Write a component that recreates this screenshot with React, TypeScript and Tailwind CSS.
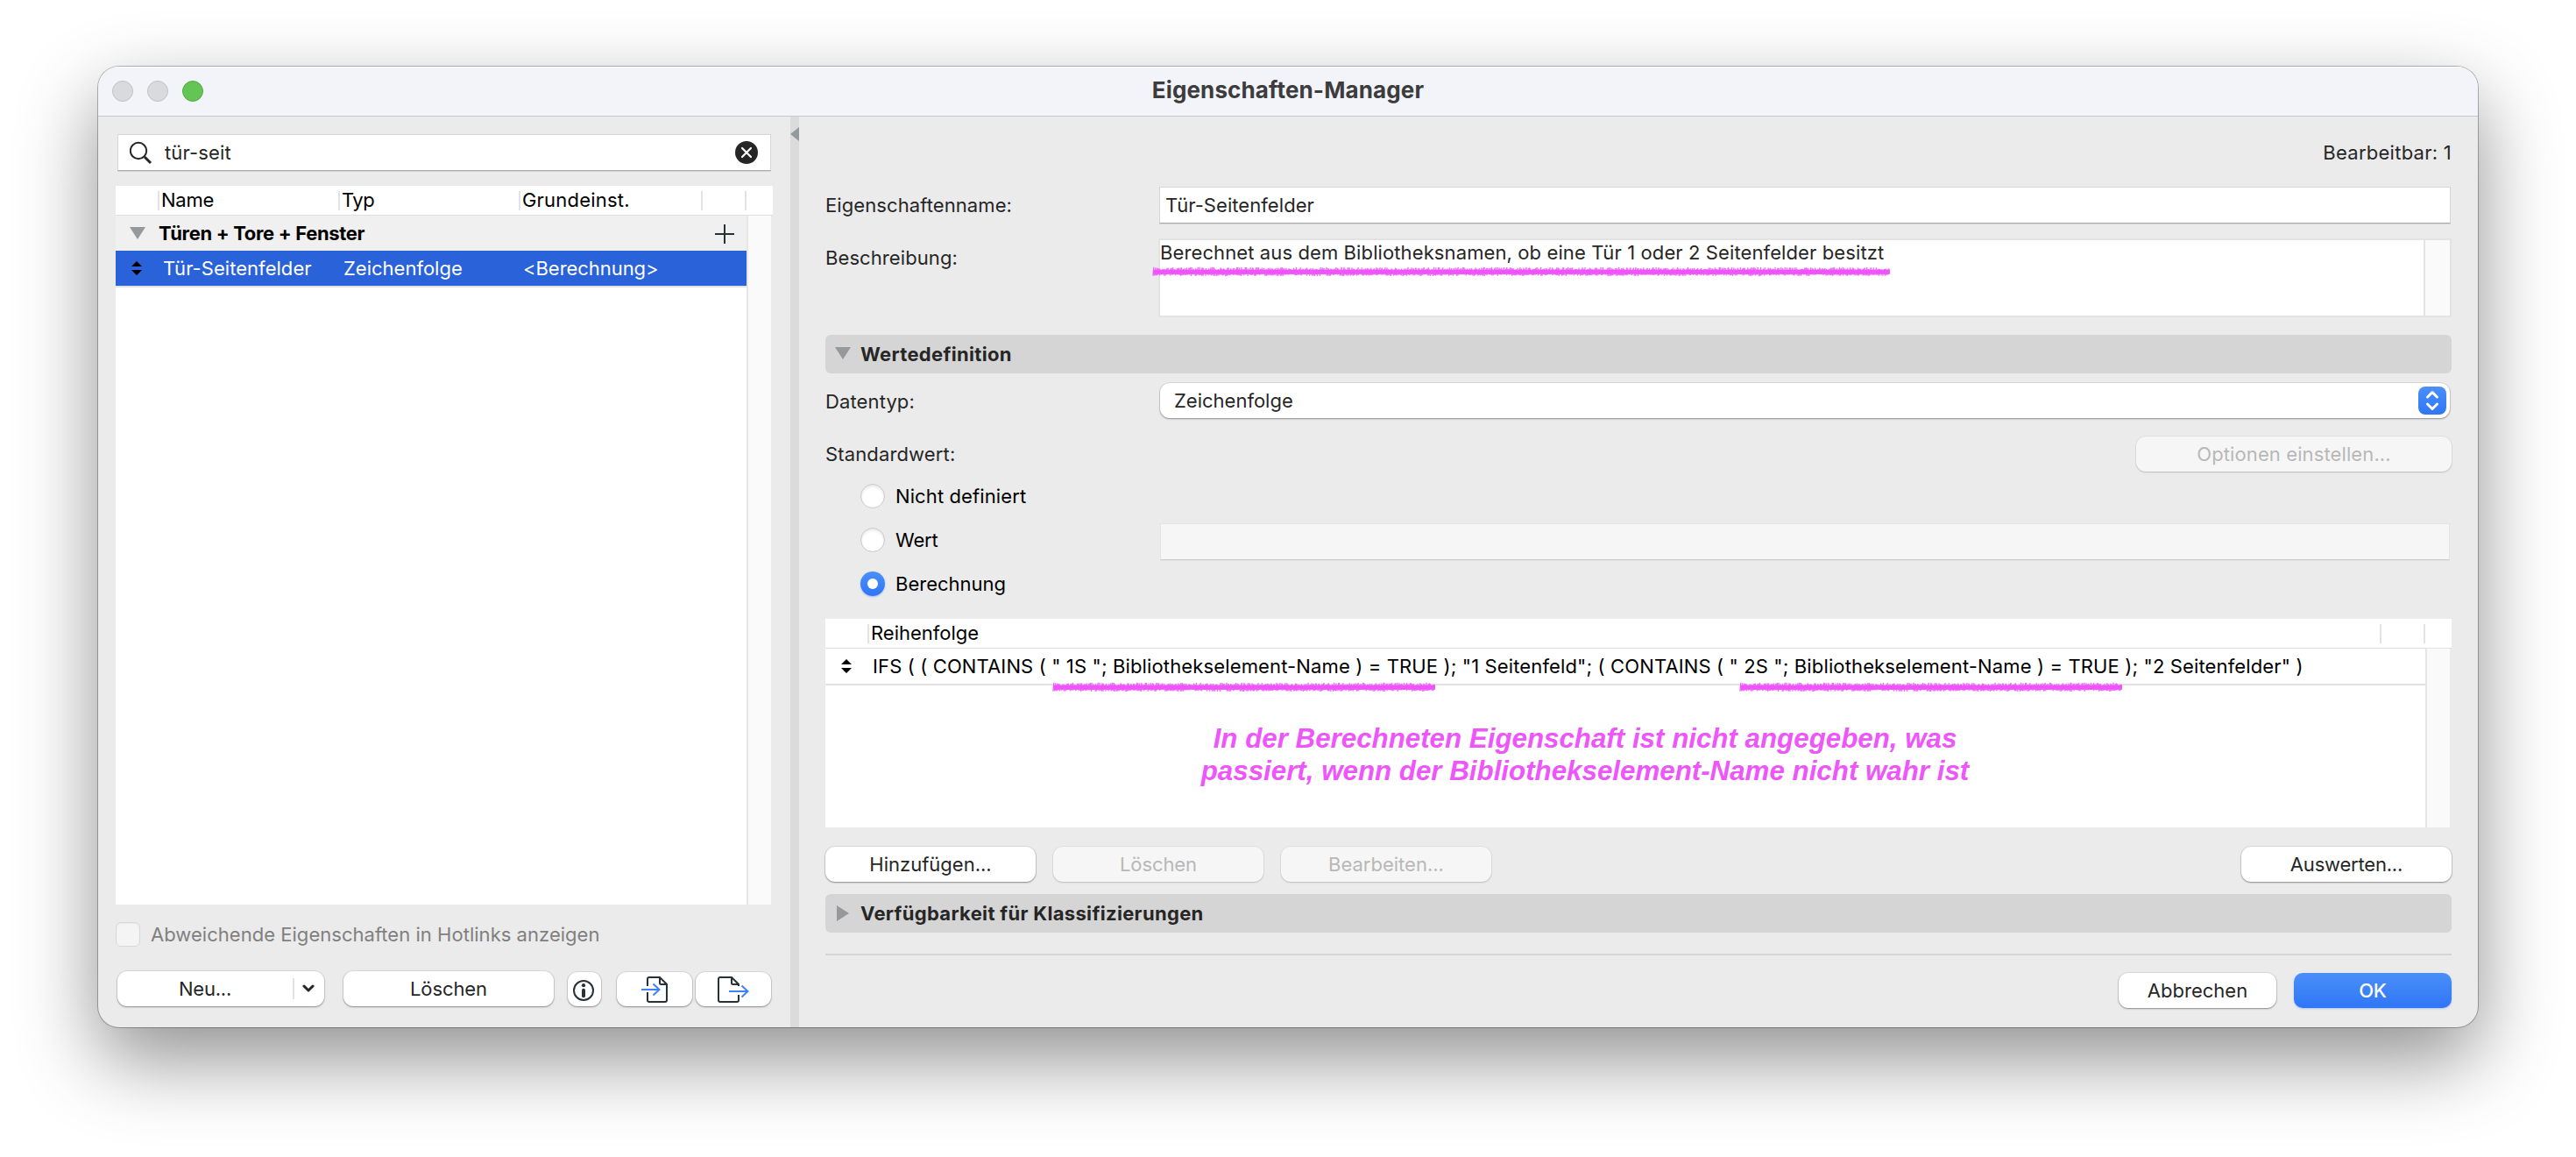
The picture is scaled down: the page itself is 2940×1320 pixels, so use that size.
import type { ReactNode } from "react";

const INK = "text-[#262626]";

function Marker({ width, className }: { width: number; className: string }) {
  let seed = 7;
  const rnd = () => {
    seed = (seed * 16807) % 2147483647;
    return seed / 2147483647;
  };
  const strokes: string[] = [];
  for (let x = 1; x < width - 3; x += 1.5) {
    const top = 0.8 + rnd() * 2.6;
    const bottom = 8.6 + rnd() * 2.4;
    strokes.push(`M${x.toFixed(1)} ${bottom.toFixed(1)}L${(x + rnd() * 2.6).toFixed(1)} ${top.toFixed(1)}`);
  }
  return (
    <svg className={`absolute ${className}`} width={width} height={12} viewBox={`0 0 ${width} 12`} fill="none">
      <path d={`M1 6.2H${width - 1}`} stroke="#ee55fa" strokeWidth={5} />
      <path d={strokes.join("")} stroke="#ee55fa" strokeWidth={1.4} strokeOpacity={0.85} />
    </svg>
  );
}

function Sorter() {
  return (
    <svg width={12} height={16} viewBox="0 0 12 16" fill="#000">
      <path d="M0 6 6 0l6 6zM0 10h12l-6 6z" />
    </svg>
  );
}

function Button({ children, className = "", disabled = false }: { children: ReactNode; className?: string; disabled?: boolean }) {
  const look = disabled
    ? "bg-[#f6f6f6] text-[#b8b8b8] shadow-[0_0_0_1px_rgba(0,0,0,0.04),0_1px_2px_rgba(0,0,0,0.16)]"
    : "bg-white text-[#262626] shadow-[0_0_0_1px_rgba(0,0,0,0.07),0_1px_2px_rgba(0,0,0,0.36)]";
  return <button className={`flex h-10 shrink-0 items-center justify-center rounded-[11px] ${look} ${className}`}>{children}</button>;
}

function Radio({ label, checked = false, tracking = "" }: { label: string; checked?: boolean; tracking?: string }) {
  return (
    <div className="flex h-7 w-[382px] shrink-0 items-center gap-3 pl-10 text-black">
      {checked ? (
        <span className="flex size-7 items-center justify-center rounded-full bg-gradient-to-b from-[#4a8ff8] to-[#3076f6] shadow-[0_1px_2px_rgba(48,118,246,0.4)]">
          <span className="size-3 rounded-full bg-white" />
        </span>
      ) : (
        <span className="size-7 rounded-full border border-[#c9c9c9] bg-white shadow-[inset_0_2px_3px_rgba(0,0,0,0.1)]" />
      )}
      <span className={tracking}>{label}</span>
    </div>
  );
}

function Section({ title, open, className }: { title: string; open: boolean; className: string }) {
  return (
    <div className={`flex h-11 items-center rounded-md bg-[#d5d5d5] font-bold tracking-[0.33px] text-[#262626] ${className}`}>
      <svg className="mr-[11px] ml-[11px]" width={18} height={18} viewBox="0 0 18 18" fill="#94999c">
        {open ? <path d="M0 1h18L9 15z" /> : <path d="M2 0v18l14-9z" />}
      </svg>
      {title}
    </div>
  );
}

const ColumnLine = ({ className = "" }: { className?: string }) => <span className={`h-[22px] w-0.5 shrink-0 bg-[#e3e3e3] ${className}`} />;

function Sidebar() {
  return (
    <div className="flex w-[790px] shrink-0 flex-col pt-5 pl-5">
      <div className={`ml-0.5 flex h-[42px] w-[746px] items-center border border-[#d6d6d6] border-b-[#adadad] bg-white shadow-[0_1px_0_rgba(0,0,0,0.1)] ${INK}`}>
        <svg className="ml-[13px]" width={26} height={28} viewBox="0 0 26 28" fill="none" stroke="#262626">
          <circle cx={10} cy={12} r={9.2} strokeWidth={2} />
          <path d="m17 19 7 7" strokeWidth={3} />
        </svg>
        <span className="ml-3.5 tracking-[0.14px]">tür-seit</span>
        <svg className="mr-3.5 ml-auto" width={26} height={26} viewBox="0 0 26 26" fill="none">
          <circle cx={13} cy={13} r={13} fill="#262626" />
          <path d="m8 8 10 10M18 8 8 18" stroke="#fff" strokeWidth={2.2} strokeLinecap="round" />
        </svg>
      </div>

      <div className="mt-[17px] flex h-[820px] w-[750px] flex-col text-black">
        <div className="flex h-[34px] items-center border-b border-[#e0e0e0] bg-white">
          <ColumnLine className="ml-12" />
          <span className="w-[204px] pb-0.5 pl-0.5 tracking-[-0.25px]">Name</span>
          <ColumnLine />
          <span className="w-[204px] pb-0.5 pl-0.5 tracking-[-0.5px]">Typ</span>
          <ColumnLine />
          <span className="w-[206px] pb-0.5 pl-0.5 tracking-[0.2px]">Grundeinst.</span>
          <ColumnLine />
          <ColumnLine className="ml-12" />
        </div>
        <div className="flex min-h-0 flex-1 pr-0.5">
          <div className="flex flex-1 flex-col bg-white">
            <div className="flex h-10 items-center bg-[#f0f0f0]">
              <svg className="ml-4" width={18} height={14} viewBox="0 0 18 14" fill="#94999c">
                <path d="M0 0h18L9 14z" />
              </svg>
              <span className="ml-[15px] font-bold tracking-[-0.33px]">Türen + Tore + Fenster</span>
              <svg className="mt-0.5 mr-3.5 ml-auto" width={22} height={22} viewBox="0 0 22 22" stroke="#263238" strokeWidth={2}>
                <path d="M0 11h22M11 0v22" />
              </svg>
            </div>
            <div className="flex h-10 items-center bg-[#2962d9] text-white">
              <span className="ml-[18px] flex">
                <Sorter />
              </span>
              <span className="ml-6 w-[206px] tracking-[0.04px]">Tür-Seitenfelder</span>
              <span className="w-[205px]">Zeichenfolge</span>
              <span className="tracking-[-0.05px]">&lt;Berechnung&gt;</span>
            </div>
            <div className="h-0.5 bg-[#e2e2e2]" />
          </div>
          <div className="w-7 border-l-2 border-[#e6e6e6] bg-[#fafafa]" />
        </div>
      </div>

      <div className="mt-5 flex h-7 items-center text-[#808080]">
        <span className="size-7 rounded-md border border-[#d8d8d8] bg-[#f4f4f4] shadow-[inset_0_1px_2px_rgba(0,0,0,0.06)]" />
        <span className="ml-3 tracking-[0.03px]">Abweichende Eigenschaften in Hotlinks anzeigen</span>
      </div>

      <div className="mt-7 flex h-10 items-end pl-0.5">
        <Button className="w-[236px]">
          <span className="w-[200px] text-center tracking-[-0.2px]">Neu...</span>
          <span className="h-6 w-0.5 bg-[#e2e2e2]" />
          <svg className="mr-auto ml-[9px]" width={14} height={10} viewBox="0 0 14 10" fill="none" stroke="#262626" strokeWidth={3} strokeLinecap="round" strokeLinejoin="round">
            <path d="m2 2 5 5 5-5" />
          </svg>
        </Button>
        <Button className="ml-[22px] w-60 tracking-[-0.1px]">Löschen</Button>
        <Button className="ml-4 h-[39px]! w-[38px]">
          <svg className="mt-0.5 mr-0.5" width={24} height={24} viewBox="0 0 24 24">
            <circle cx={12} cy={12} r={11} fill="none" stroke="#263238" strokeWidth={2} />
            <circle cx={12} cy={6.2} r={2.1} fill="#263238" />
            <rect x={10} y={9.8} width={4} height={10.4} rx={2} fill="#263238" />
          </svg>
        </Button>
        <Button className="ml-[18px] h-[39px]! w-[86px]">
          <svg width={30} height={30} viewBox="0 0 30 30" fill="none" strokeWidth={2}>
            <path d="M7 11V3a2 2 0 0 1 2-2h12l8 8v18a2 2 0 0 1-2 2H9a2 2 0 0 1-2-2v-9M21 2v5.5A1.5 1.5 0 0 0 22.500 9H28" stroke="#263238" />
            <path d="M0 15h20M13.500 8.500 20.500 15l-7 6.500" stroke="#3e82fb" />
          </svg>
        </Button>
        <Button className="ml-1 h-[39px]! w-[86px]">
          <svg width={36} height={30} viewBox="0 0 36 30" fill="none" strokeWidth={2}>
            <path d="M24 11V9l-8-8H3a2 2 0 0 0-2 2v24a2 2 0 0 0 2 2h19a2 2 0 0 0 2-2v-6M16 2v5.500A1.500 1.500 0 0 0 17.500 9H23" stroke="#263238" />
            <path d="M13 17h21M27.500 10.500 34.500 17l-7 6.500" stroke="#3e82fb" />
          </svg>
        </Button>
      </div>
    </div>
  );
}

function Details() {
  return (
    <div className={`flex flex-1 flex-col px-[30px] pt-[27px] ${INK}`}>
      <div className="h-7 text-right leading-7 tracking-[0.26px]">Bearbeitbar: 1</div>

      <div className="mt-[25px] flex h-[42px] items-center">
        <span className="w-[381px] tracking-[0.09px]">Eigenschaftenname:</span>
        <div className="mr-px flex h-full flex-1 items-center border border-[#d6d6d6] border-b-[#adadad] bg-white pl-1.5 tracking-[0.06px] shadow-[0_1px_0_rgba(0,0,0,0.1)]">
          Tür-Seitenfelder
        </div>
      </div>

      <div className="mt-[17px] flex h-[90px]">
        <span className="w-[380px] leading-[44px] tracking-[0.09px]">Beschreibung:</span>
        <div className="relative flex flex-1 border-2 border-[#e3e3e3] bg-white">
          <div className="flex-1 leading-7 tracking-[0.108px]">Berechnet aus dem Bibliotheksnamen, ob eine Tür 1 oder 2 Seitenfelder besitzt</div>
          <div className="w-[30px] border-l-2 border-[#e3e3e3] bg-[#fafafa]" />
          <Marker width={843} className="top-[30px] -left-[9px]" />
        </div>
      </div>

      <Section title="Wertedefinition" open className="mt-5" />

      <div className="mt-2.5 flex h-[42px] items-center">
        <span className="w-[382px] pt-px tracking-[0.12px]">Datentyp:</span>
        <div className="mr-0.5 flex h-10 flex-1 items-center rounded-[11px] bg-white pr-1 pl-4 shadow-[0_0_0_1px_rgba(0,0,0,0.07),0_1px_2px_rgba(0,0,0,0.36)]">
          Zeichenfolge
          <span className="ml-auto flex size-8 items-center justify-center rounded-lg bg-gradient-to-b from-[#4a8ff8] to-[#3076f6]">
            <svg width={16} height={24} viewBox="0 0 16 24" fill="none" stroke="#fff" strokeWidth={3} strokeLinecap="round" strokeLinejoin="round">
              <path d="m2.500 8 5.500-5.500L13.500 8M2.500 16l5.500 5.500 5.500-5.500" />
            </svg>
          </span>
        </div>
      </div>

      <div className="mt-5 flex h-10 items-center justify-between">
        <span className="tracking-[0.14px]">Standardwert:</span>
        <Button disabled className="w-[360px] tracking-[0.11px]">Optionen einstellen...</Button>
      </div>

      <div className="mt-3.5">
        <Radio label="Nicht definiert" tracking="tracking-[0.11px]" />
      </div>
      <div className="mt-[17px] flex h-[42px] items-start">
        <div className="pt-[5px]">
          <Radio label="Wert" tracking="tracking-[-0.15px]" />
        </div>
        <div className="mr-0.5 h-full flex-1 border border-[#e4e4e4] border-b-[#cccccc] bg-[#f6f6f6] shadow-[0_1px_0_rgba(0,0,0,0.04)]" />
      </div>
      <div className="mt-[13px]">
        <Radio label="Berechnung" checked />
      </div>

      <div className="relative mt-[26px] flex h-[238px] flex-col text-black">
        <div className="flex h-[34px] items-center border-b border-[#e0e0e0] bg-white">
          <ColumnLine className="ml-12" />
          <span className="pb-0.5 pl-0.5">Reihenfolge</span>
          <ColumnLine className="ml-auto" />
          <ColumnLine className="mr-[30px] ml-12" />
        </div>
        <div className="flex min-h-0 flex-1 pr-0.5">
          <div className="flex-1 bg-white">
            <div className="flex h-10 items-center pl-[18px] whitespace-nowrap">
              <Sorter />
              <span className="ml-6 tracking-[0.135px]">
                {'IFS ( ( CONTAINS ( " 1S "; Bibliothekselement-Name ) = TRUE ); "1 Seitenfeld"; ( CONTAINS ( " 2S "; Bibliothekselement-Name ) = TRUE ); "2 Seitenfelder" )'}
              </span>
            </div>
            <div className="h-0.5 bg-[#e2e2e2]" />
          </div>
          <div className="w-7 border-l-2 border-[#e6e6e6] bg-[#fafafa]" />
        </div>
        <Marker width={438} className="top-[72px] left-[259px]" />
        <Marker width={438} className="top-[72px] left-[1043px]" />
        <div className="absolute top-[118px] left-[417px] w-[900px] text-center font-['Liberation_Sans',sans-serif] text-[31.3px] leading-[37px] font-bold text-[#ee55fa] italic">
          In der Berechneten Eigenschaft ist nicht angegeben, was
          <br />
          passiert, wenn der Bibliothekselement-Name nicht wahr ist
        </div>
      </div>

      <div className="mt-[22px] flex gap-5">
        <Button className="w-60">Hinzufügen...</Button>
        <Button disabled className="w-60 tracking-[-0.1px]">Löschen</Button>
        <Button disabled className="w-60">Bearbeiten...</Button>
        <Button className="ml-auto w-60 tracking-[-0.2px]">Auswerten...</Button>
      </div>

      <Section title="Verfügbarkeit für Klassifizierungen" open={false} className="mt-3.5" />

      <div className="mt-6 h-0.5 bg-[#d5d5d5]" />
      <div className="mt-5 flex justify-end gap-5">
        <Button className="w-[180px]">Abbrechen</Button>
        <button className="h-10 w-[180px] rounded-[10px] bg-gradient-to-b from-[#4a8ff8] to-[#3076f6] font-medium tracking-[-0.36px] text-white shadow-[0_1px_2px_rgba(48,118,246,0.35)]">
          OK
        </button>
      </div>
    </div>
  );
}

export default function App() {
  return (
    <div className="h-[1320px] w-[2940px] overflow-hidden bg-white pt-[76px] pl-28 font-['Inter',sans-serif] text-[22px] leading-7">
      <div className="flex h-[1096px] w-[2716px] flex-col overflow-hidden rounded-[24px] bg-[#ebebeb] shadow-[0_0_0_1px_rgba(0,0,0,0.28),0_36px_90px_rgba(0,0,0,0.44)]">
        <div className="relative flex h-[57px] shrink-0 items-center justify-center border-b border-[#c6c7ca] bg-[#f2f4f9] shadow-[inset_0_1px_0_#fff]">
          <div className="absolute left-4 flex gap-4">
            <span className="size-6 rounded-full border border-[#bfc0c3] bg-[#d9dade]" />
            <span className="size-6 rounded-full border border-[#bfc0c3] bg-[#d9dade]" />
            <span className="size-6 rounded-full border border-[#55ab46] bg-[#62c554]" />
          </div>
          <span className="pb-0.5 text-[26px] font-bold tracking-[0.13px] text-[#3c3c3e]">Eigenschaften-Manager</span>
        </div>
        <div className="flex min-h-0 flex-1">
          <Sidebar />
          <div className="w-2.5 shrink-0 bg-[#dbdbdb] pt-3">
            <svg width={10} height={16} viewBox="0 0 10 16" fill="#94999c">
              <path d="M10 0v16L0 8z" />
            </svg>
          </div>
          <Details />
        </div>
      </div>
    </div>
  );
}
